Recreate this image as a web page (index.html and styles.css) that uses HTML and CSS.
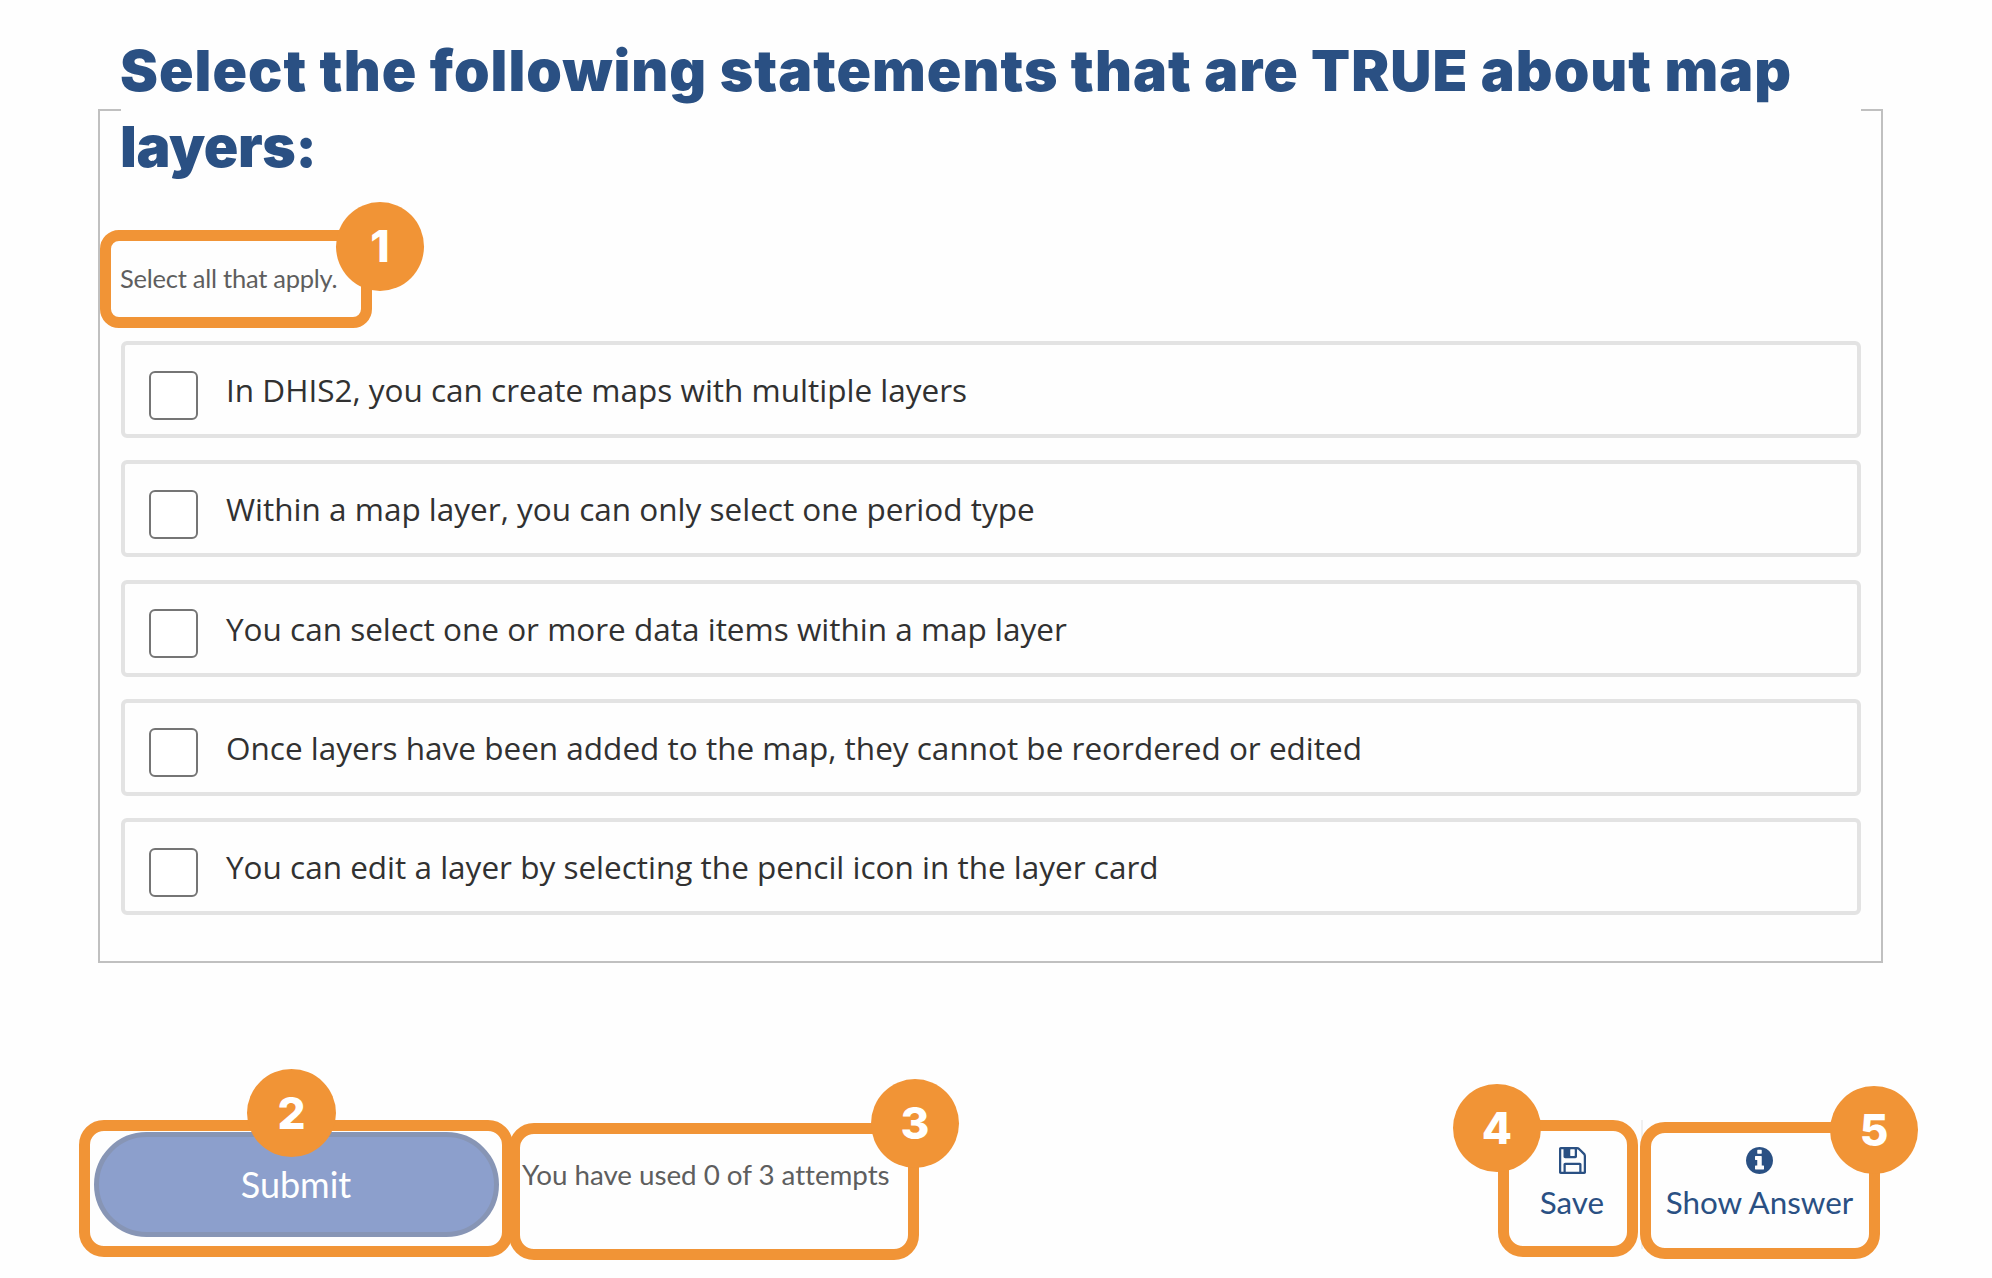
FILE: index.html
```html
<!DOCTYPE html>
<html lang="en">
<head>
<meta charset="utf-8">
<title>Map layers</title>
<link rel="stylesheet" href="styles.css">
</head>
<body>
<main class="problem">
  <fieldset class="question">
    <legend class="title"><span class="title-line first">Select the following statements that are TRUE about map</span> <span class="title-line second">layers:</span></legend>
    <p class="hint">Select all that apply.</p>
    <div class="choices">
      <label class="choice"><input class="box" type="checkbox"><span class="label">In DHIS2, you can create maps with multiple layers</span></label>
      <label class="choice"><input class="box" type="checkbox"><span class="label">Within a map layer, you can only select one period type</span></label>
      <label class="choice"><input class="box" type="checkbox"><span class="label">You can select one or more data items within a map layer</span></label>
      <label class="choice"><input class="box" type="checkbox"><span class="label">Once layers have been added to the map, they cannot be reordered or edited</span></label>
      <label class="choice"><input class="box" type="checkbox"><span class="label">You can edit a layer by selecting the pencil icon in the layer card</span></label>
    </div>
  </fieldset>
  <div class="actions">
    <button class="submit" type="button">Submit</button>
    <span class="attempts">You have used 0 of 3 attempts</span>
    <div class="tools">
      <button class="tool save" type="button">
        <svg class="icon" viewBox="0 0 1536 1536"><path d="M384 1408h768v-384H384v384zm896 0h128V512q0-14-10-38.500t-20-34.500l-281-281q-10-10-34-20t-39-10v416q0 40-28 68t-68 28H352q-40 0-68-28t-28-68V128H128v1280h128V992q0-40 28-68t68-28h832q40 0 68 28t28 68v416zM896 480V160q0-13-9.500-22.500T864 128H672q-13 0-22.500 9.500T640 160v320q0 13 9.500 22.500T672 512h192q13 0 22.500-9.500T896 480zm640 32v928q0 40-28 68t-68 28H96q-40 0-68-28t-28-68V96Q0 56 28 28T96 0h928q40 0 88 20t76 48l280 280q28 28 48 76t20 88z"/></svg>
        <span>Save</span>
      </button>
      <button class="tool answer" type="button">
        <svg class="icon" viewBox="0 0 1536 1536"><path d="M1024 1248v-160q0-14-9-23t-23-9h-96V544q0-14-9-23t-23-9H544q-14 0-23 9t-9 23v160q0 14 9 23t23 9h96v320h-96q-14 0-23 9t-9 23v160q0 14 9 23t23 9h448q14 0 23-9t9-23zM896 352V192q0-14-9-23t-23-9H672q-14 0-23 9t-9 23v160q0 14 9 23t23 9h192q14 0 23-9t9-23zm640 416q0 209-103 385.500T1153.500 1433 768 1536t-385.500-103T103 1153.500 0 768t103-385.500T382.500 103 768 0t385.500 103T1433 382.500 1536 768z"/></svg>
        <span>Show Answer</span>
      </button>
    </div>
  </div>
</main>
<div class="frame f1"></div><div class="pin p1">1</div>
<div class="frame f2"></div><div class="pin p2">2</div>
<div class="frame f3"></div><div class="pin p3">3</div>
<div class="frame f4"></div><div class="pin p4">4</div>
<div class="frame f5"></div><div class="pin p5">5</div>
</body>
</html>
```
FILE: styles.css
```css
* { box-sizing: border-box; }
body {
  margin: 0;
  position: relative;
  width: 1992px;
  height: 1278px;
  overflow: hidden;
  background: #fefefe;
  font-family: Lato, sans-serif;
  color: #5e5e5e;
}
.problem { padding: 33px 109px 0 98px; }
.question {
  margin: 0;
  padding: 0 20px 0 21px;
  height: 930px;
  border: 2px solid #c0c0c0;
}
.title {
  width: 1740px;
  height: 153px;
  padding: 0;
  font: 900 57px/75.5px Inter, sans-serif;
  color: #2a5083;
}
.title-line { display: block; margin-left: -1px; white-space: nowrap; }
.first { letter-spacing: 1.02px; }
.second { letter-spacing: -0.4px; }
.hint {
  margin: 77px 0 0 -1px;
  height: 31px;
  font-size: 25.5px;
  line-height: 31px;
  letter-spacing: -0.25px;
}
.choices {
  display: grid;
  gap: 22.3px;
  margin-top: 47px;
}
.choice {
  display: flex;
  height: 97px;
  padding: 0 24px;
  border: 4px solid #e3e3e3;
  border-radius: 6px;
}
.box {
  appearance: none;
  flex: none;
  width: 49px;
  height: 49px;
  margin: 25.5px 28px 0 0;
  border: 2px solid #757575;
  border-radius: 6px;
  background: #fff;
}
.label {
  margin-top: 23px;
  font: 31.5px/44px "Open Sans", sans-serif;
  color: #313131;
  white-space: nowrap;
}
.actions {
  display: flex;
  align-items: flex-start;
  margin: 157px 0 0 -4px;
}
.submit {
  width: 405px;
  height: 105px;
  margin-top: 12px;
  padding: 0 1px 2px 0;
  border: 5px solid #8795b5;
  border-radius: 53px;
  background: #8c9fcc;
  color: #fff;
  font: 36px/42px Lato, sans-serif;
}
.attempts {
  margin: 38px 0 0 23px;
  font-size: 27.8px;
  line-height: 34px;
  letter-spacing: -0.05px;
  white-space: nowrap;
}
.tools { display: flex; margin-left: auto; }
.tool {
  display: flex;
  flex-direction: column;
  align-items: center;
  height: 129px;
  padding: 27px 0 0;
  border: 0;
  background: none;
  color: #2a5083;
  font: 31.4px/38px Lato, sans-serif;
  white-space: nowrap;
}
.save { width: 136px; padding-right: 2px; }
.answer { width: 242px; padding-right: 7px; border-left: 2px solid #f0f0f0; }
.icon { width: 27px; height: 27px; margin-bottom: 9px; fill: currentColor; }

/* numbered callouts laid over the page */
.frame {
  position: absolute;
  border: 11px solid #f19436;
  border-radius: 25px;
}
.f1 { left: 100px; top: 230px; width: 272px; height: 98px; border-radius: 19px; }
.f2 { left: 79px; top: 1120px; width: 434px; height: 137px; }
.f3 { left: 509px; top: 1123px; width: 410px; height: 137px; }
.f4 { left: 1498px; top: 1120px; width: 140px; height: 137px; }
.f5 { left: 1640px; top: 1122px; width: 240px; height: 137px; }
.pin {
  position: absolute;
  width: 88px;
  height: 88px;
  border-radius: 50%;
  background: #f19436;
  color: #fff;
  font: 800 44px/88px Inter, sans-serif;
  text-align: center;
}
.p1 { left: 336px; top: 202px; height: 89px; }
.p2 { left: 247px; top: 1069px; width: 89px; }
.p3 { left: 871px; top: 1079px; height: 89px; }
.p4 { left: 1453px; top: 1084px; }
.p5 { left: 1830px; top: 1086px; }
```
